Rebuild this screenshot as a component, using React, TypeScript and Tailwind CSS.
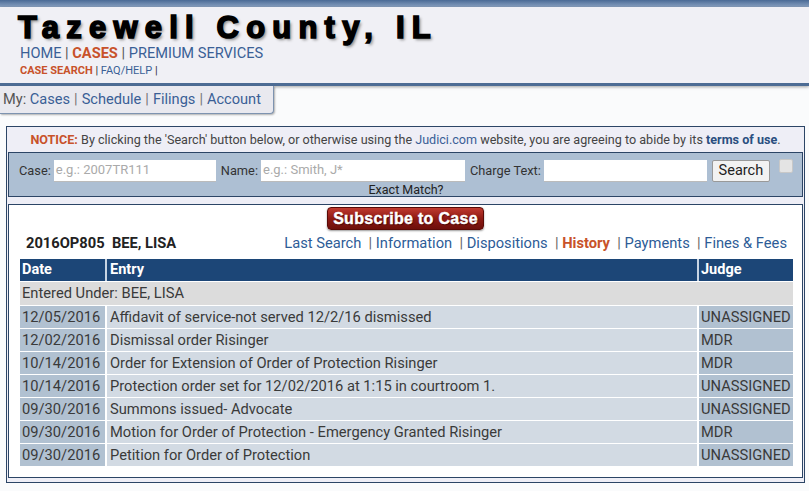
import React from "react";

const rows = [
  ["12/05/2016", "Affidavit of service-not served 12/2/16 dismissed", "UNASSIGNED"],
  ["12/02/2016", "Dismissal order Risinger", "MDR"],
  ["10/14/2016", "Order for Extension of Order of Protection Risinger", "MDR"],
  ["10/14/2016", "Protection order set for 12/02/2016 at 1:15 in courtroom 1.", "UNASSIGNED"],
  ["09/30/2016", "Summons issued- Advocate", "UNASSIGNED"],
  ["09/30/2016", "Motion for Order of Protection - Emergency Granted Risinger", "MDR"],
  ["09/30/2016", "Petition for Order of Protection", "UNASSIGNED"],
];

export default function App() {
  return (
    <div className="w-[809px] h-[491px] overflow-hidden bg-[#fafbfc] font-['Roboto',sans-serif] text-[#333]">
      {/* Header */}
      <div className="h-[7px] bg-gradient-to-b from-[#4a6a95] to-[#8aa2c2]" />
      <div className="h-[79px] bg-[#f0f0f5] border-b-[3px] border-[#4d6c94] shadow-[0_1px_3px_rgba(0,0,0,0.35)] pl-[20px] pt-[5px]">
        <div className="font-['Liberation_Sans',sans-serif] font-bold text-[31px] leading-[32px] tracking-[7.2px] text-black ml-[-2px] [-webkit-text-stroke:1.6px_black] [text-shadow:2px_2px_3px_#888]">
          Tazewell County, IL
        </div>
        <div className="mt-[0px] text-[14.6px] leading-[18px] text-[#3a5f96]">
          HOME <span className="text-[#555]">|</span> <span className="font-bold text-[#c8522a]">CASES</span> <span className="text-[#555]">|</span> PREMIUM SERVICES
        </div>
        <div className="mt-[2px] text-[11px] leading-[14px] text-[#3a5f96]">
          <span className="font-bold text-[#c8522a]">CASE SEARCH</span> <span className="text-[#333]">|</span> FAQ/HELP <span className="text-[#333]">|</span>
        </div>
      </div>

      {/* My tab */}
      <div className="w-[274px] h-[28px] bg-[#e9e9ef] border-r border-b border-[#7d93b0] rounded-br-[4px] shadow-[1px_1px_2px_rgba(0,0,0,0.3)] flex items-center pl-[3px] text-[14.6px] text-[#3a5f96]">
        <span className="text-[#555]">My:</span>&nbsp;Cases <span className="text-[#777] mx-[4px]">|</span>Schedule <span className="text-[#777] mx-[4px]">|</span>Filings <span className="text-[#777] mx-[4px]">|</span>Account
      </div>

      {/* Main box */}
      <div className="mt-[12px] ml-[6px] w-[799px] h-[357px] border border-[#2c4566] bg-[#eeeef6] flex flex-col">
        <div className="h-[25px] pt-[2px] flex items-center justify-center text-[12.6px] text-[#444]">
          <span className="font-bold text-[#c8522a]">NOTICE:</span>&nbsp;By clicking the 'Search' button below, or otherwise using the&nbsp;<span className="text-[#3a5f96]">Judici.com</span>&nbsp;website, you are agreeing to abide by its&nbsp;<span className="font-bold text-[#2a4f80]">terms of use</span>.
        </div>
        <div className="mx-[1px] h-[45px] bg-[#adbfd3] border border-[#2c4566] flex flex-col">
          <div className="flex items-center h-[29px] pt-[6px] text-[12.8px] text-[#333]">
            <span className="ml-[10px]">Case:</span>
            <div className="ml-[3px] w-[162px] h-[22px] bg-white border-b border-[#bbb] flex items-center pl-[2px] text-[13px] text-[#aaa]">e.g.: 2007TR111</div>
            <span className="ml-[5px]">Name:</span>
            <div className="ml-[3px] w-[204px] h-[22px] bg-white border-b border-[#bbb] flex items-center pl-[2px] text-[13px] text-[#aaa]">e.g.: Smith, J*</div>
            <span className="ml-[5px]">Charge Text:</span>
            <div className="ml-[3px] w-[163px] h-[22px] bg-white border-b border-[#bbb]" />
            <div className="ml-[5px] w-[58px] h-[22px] bg-[#f2f2f2] border border-[#999] rounded-[2px] flex items-center justify-center text-[14.5px] text-[#222]">Search</div>
            <div className="ml-[9px] self-start mt-[0px] w-[14px] h-[14px] bg-[#e4e4e4] border border-[#c8c8c8] rounded-[2px]" />
          </div>
          <div className="h-[14px] flex justify-center text-[12.5px] leading-[16px] text-[#222] pl-[1px]">Exact Match?</div>
        </div>
        <div className="mt-[7px] mx-[1px] flex-1 mb-[4px] bg-white border border-[#2c4566] flex flex-col">
          <div className="flex justify-center pt-[2px]">
            <div className="w-[157px] h-[23px] rounded-[4px] bg-gradient-to-b from-[#c0392f] via-[#8e1a14] to-[#6e0f0b] border border-[#5a0a07] shadow-[0_1px_2px_rgba(0,0,0,0.4)] flex items-center justify-center font-['Liberation_Sans',sans-serif] font-bold text-[16px] tracking-[0.3px] text-white [-webkit-text-stroke:0.4px_white] [text-shadow:1px_1px_1px_#400]">
              Subscribe to Case
            </div>
          </div>
          <div className="flex items-center h-[25px] mt-[1px] text-[14.7px]">
            <span className="ml-[17px] font-bold text-[#222]">2016OP805&nbsp;&nbsp;BEE, LISA</span>
            <div className="ml-auto mr-[15px] text-[#2d5c97]">
              Last Search <span className="text-[#666]">&nbsp;|</span> Information <span className="text-[#666]">&nbsp;|</span> Dispositions <span className="text-[#666]">&nbsp;|</span> <span className="font-bold text-[#c8522a]">History</span> <span className="text-[#666]">&nbsp;|</span> Payments <span className="text-[#666]">&nbsp;|</span> Fines &amp; Fees
            </div>
          </div>
          <div className="ml-[11px] mr-[9px] mt-[3px] text-[14.7px]">
            <div className="flex h-[22px] bg-[#1c4677] text-white font-bold items-center text-[14.5px]">
              <div className="w-[87px] pl-[2px] border-r-2 border-[#c8d4e2] h-full flex items-center">Date</div>
              <div className="flex-1 pl-[3px] border-r-2 border-[#c8d4e2] h-full flex items-center">Entry</div>
              <div className="w-[94px] pl-[2px]">Judge</div>
            </div>
            <div className="h-[23px] mt-[1px] bg-[#dcdcdc] flex items-center pl-[2px] text-[#3a3a3a]">Entered Under: BEE, LISA</div>
            {rows.map((r, i) => (
              <div key={i} className="flex h-[23px] border-t border-white text-[#3a3a3a]">
                <div className="w-[87px] bg-[#b1c1d1] pl-[2px] flex items-center border-r-2 border-white">{r[0]}</div>
                <div className="flex-1 bg-[#d2dae3] pl-[3px] flex items-center border-r-2 border-white">{r[1]}</div>
                <div className="w-[94px] bg-[#b1c1d1] pl-[2px] flex items-center">{r[2]}</div>
              </div>
            ))}
          </div>
        </div>
      </div>
    </div>
  );
}
